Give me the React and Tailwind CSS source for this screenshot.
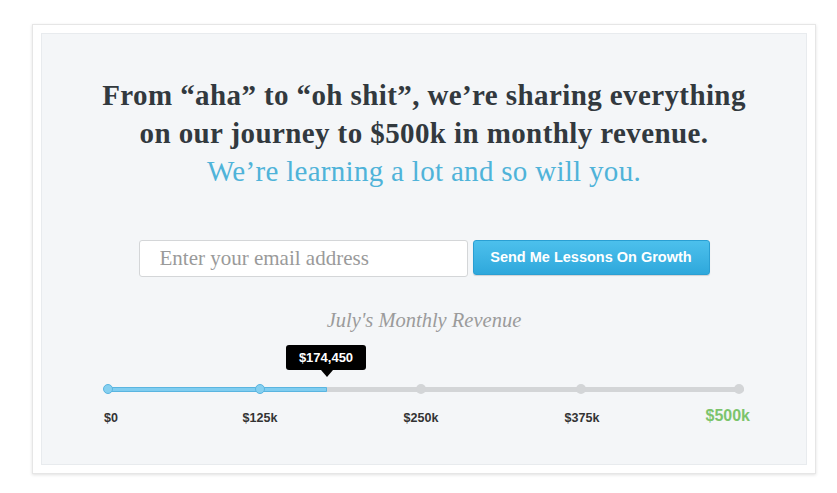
import React from "react";

const stops = [4, 156, 317, 477, 635];

const labels = [
  { at: 156, text: "$125k" },
  { at: 317, text: "$250k" },
  { at: 478, text: "$375k" },
];

const RevenueSlider = () => {
  const filled = 223; // px of the track done so far

  return (
    <div className="mx-auto w-[640px] flex flex-col">
      {/* tooltip */}
      <div className="relative h-[42px]">
        <div className="absolute left-[182px] top-0 w-[80px] h-[25px] rounded-[3px] bg-black flex items-center justify-center text-white text-[13px] font-bold font-['Liberation_Sans',sans-serif]">
          $174,450
        </div>
        <div className="absolute left-[217px] top-[25px] w-0 h-0 border-l-[6px] border-r-[6px] border-t-[7px] border-l-transparent border-r-transparent border-t-black" />
      </div>

      {/* track */}
      <div className="relative h-[5px] rounded-full bg-[#d3d5d7]">
        <div
          className="absolute left-0 top-0 h-[5px] rounded-l-full bg-[#7fcdf0] border border-[#5ab5e0]"
          style={{ width: filled }}
        />
        {stops.map((x) => (
          <span
            key={x}
            className={`absolute -top-[3px] -ml-[5px] w-[10px] h-[10px] rounded-full ${
              x < filled ? "bg-[#86d0f0] border border-[#5ab5e0]" : "bg-[#d3d5d7]"
            }`}
            style={{ left: x }}
          />
        ))}
      </div>

      {/* labels */}
      <div className="relative mt-[17px] h-[20px] flex justify-between items-start font-['Liberation_Sans',sans-serif] font-bold">
        <span className="text-[12.5px] text-[#333]">$0</span>
        {labels.map((l) => (
          <span
            key={l.text}
            className="absolute top-0 -translate-x-1/2 text-[12.5px] text-[#333]"
            style={{ left: l.at }}
          >
            {l.text}
          </span>
        ))}
        <span className="-mt-[5px] -mr-[6px] text-[16px] text-[#7cc46c]">$500k</span>
      </div>
    </div>
  );
};

export default function App() {
  return (
    <div className="w-[837px] h-[493px] bg-white pt-[24px] pl-[32px]">
      <div className="w-[784px] h-[450px] bg-white border border-[#e6e6e6] shadow-[0_1px_3px_rgba(0,0,0,0.12)] p-[8px]">
        <div className="h-full bg-[#f4f6f8] border border-[#e8ebee] pt-[42px] text-center">
          <h1 className="font-['Liberation_Serif',serif] font-bold text-[29px] tracking-[0.4px] leading-[38px] text-[#32393e]">
            From “aha” to “oh shit”, we’re sharing everything
            <br />
            on our journey to $500k in monthly revenue.
          </h1>
          <p className="font-['Liberation_Serif',serif] text-[29px] tracking-[0.3px] leading-[38px] text-[#4fb3d9]">
            We’re learning a lot and so will you.
          </p>

          <div className="mt-[50px] flex justify-center items-start gap-[5px]">
            <input
              type="text"
              placeholder="Enter your email address"
              className="w-[329px] h-[37px] bg-white border border-[#d4d6d8] rounded-[3px] px-[20px] text-[21px] font-['Liberation_Serif',serif] placeholder:text-[#9a9a9a] outline-none"
            />
            <button className="w-[237px] h-[35px] rounded-[3px] bg-gradient-to-b from-[#4cc0ec] to-[#2ea8dc] border border-[#2a9fd3] text-white text-[14.5px] font-bold font-['Liberation_Sans',sans-serif] shadow-[0_1px_1px_rgba(0,0,0,0.15)]">
              Send Me Lessons On Growth
            </button>
          </div>

          <p className="mt-[31px] font-['Liberation_Serif',serif] italic text-[20.5px] leading-[24px] text-[#9b9b9b]">
            July's Monthly Revenue
          </p>

          <div className="mt-[13px]">
            <RevenueSlider />
          </div>
        </div>
      </div>
    </div>
  );
}
